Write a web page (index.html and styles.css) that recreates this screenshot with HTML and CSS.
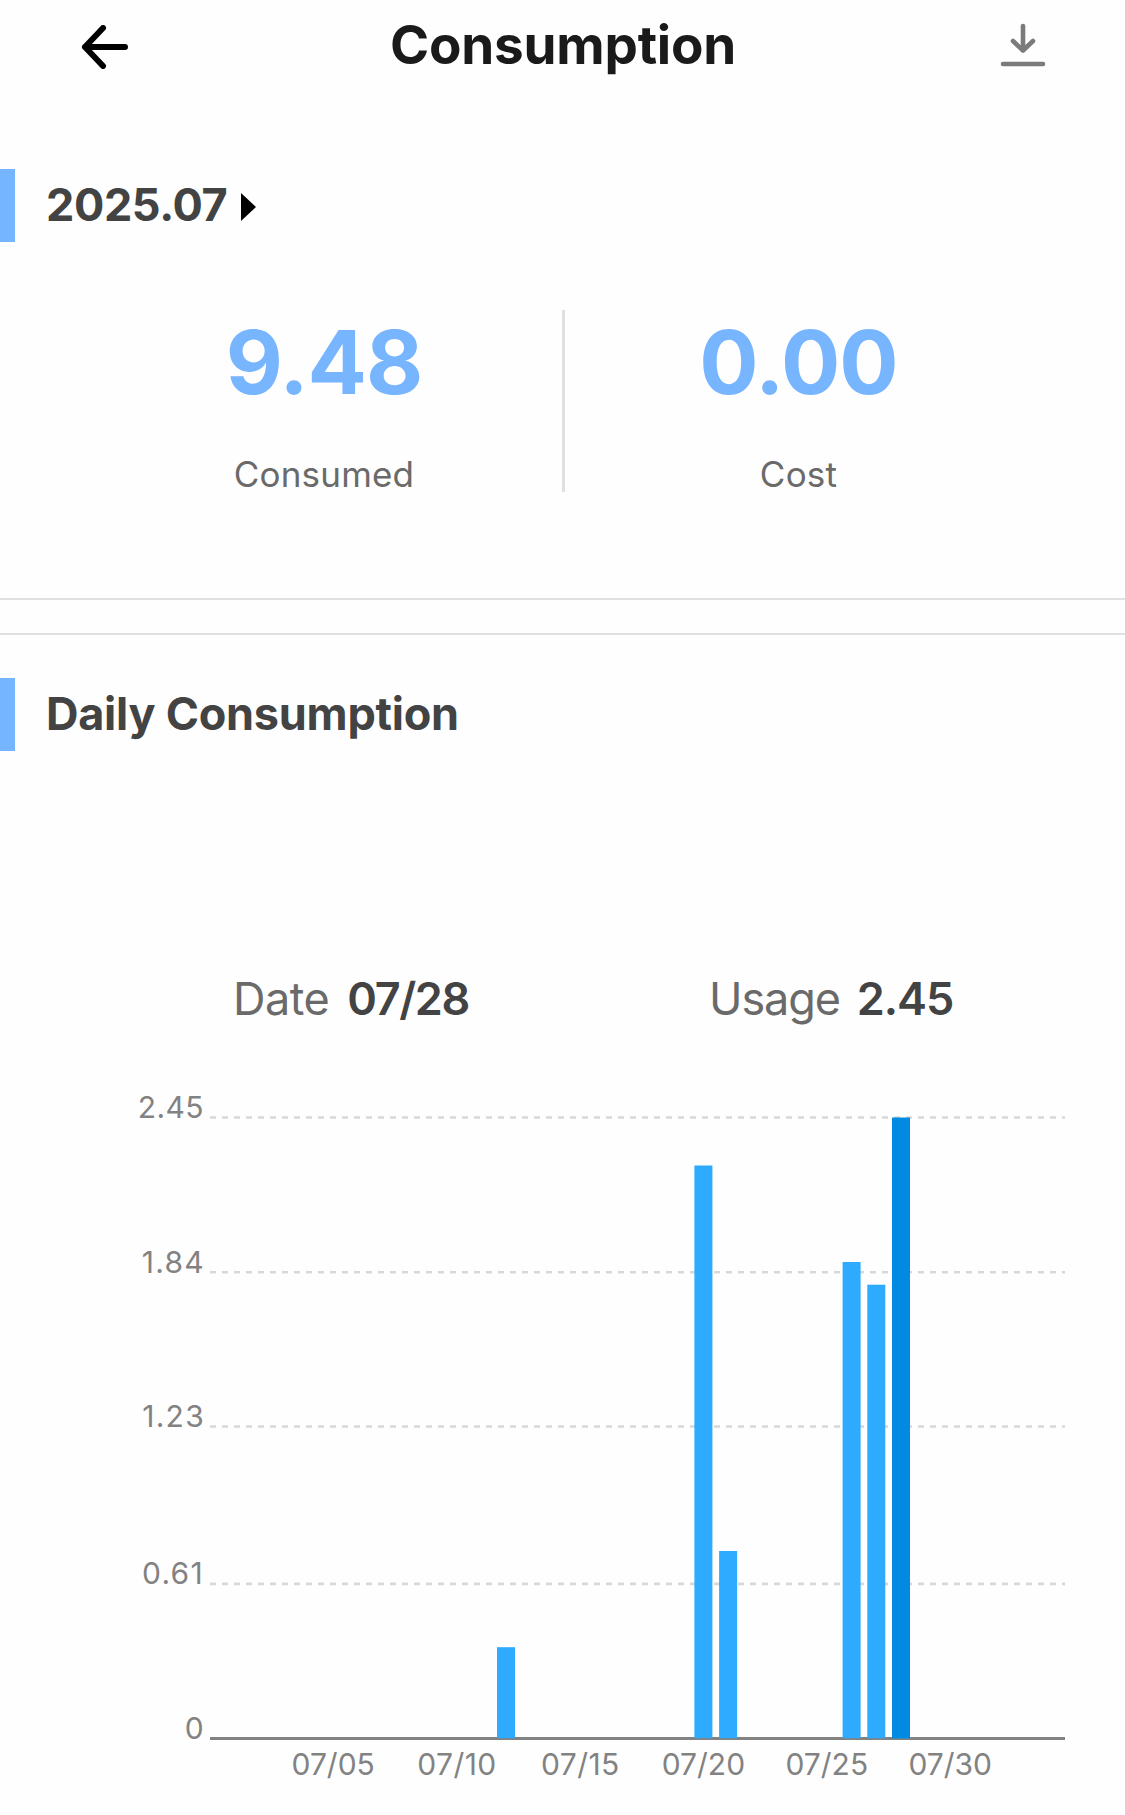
FILE: index.html
```html
<!DOCTYPE html>
<html lang="en">
<head>
    <meta charset="UTF-8">
    <meta name="viewport" content="width=device-width, initial-scale=1.0">
    <title>Consumption</title>
    <link rel="stylesheet" href="styles.css">
</head>
<body>
    <header class="header">
        <svg class="icon-back" viewBox="0 0 48 44">
            <path d="M44 22H4M22 3L4 22L22 41"/>
        </svg>
        <h1>Consumption</h1>
        <svg class="icon-download" viewBox="0 0 46 44">
            <path d="M23 3V27M13 18L23 27.5L33 18M3 41H43"/>
        </svg>
    </header>

    <section class="summary">
        <div class="section-title month">
            <span>2025.07</span>
            <svg class="caret" viewBox="0 0 15 28"><path d="M0 0L15 14L0 28Z"/></svg>
        </div>
        <div class="totals">
            <div class="total">
                <div class="value">9.48</div>
                <div class="label">Consumed</div>
            </div>
            <div class="total">
                <div class="value">0.00</div>
                <div class="label">Cost</div>
            </div>
        </div>
    </section>

    <section class="daily">
        <h2 class="section-title daily-title">Daily Consumption</h2>
        <div class="selected">
            <div class="selected-item"><span class="name">Date</span><b class="day">07/28</b></div>
            <div class="selected-item"><span class="name usage">Usage</span><b>2.45</b></div>
        </div>
        <svg class="chart" viewBox="0 1080 1125 735">
            <g class="grid">
                <path d="M210 1117.5H1065"/>
                <path d="M210 1272.2H1065"/>
                <path d="M210 1426.5H1065"/>
                <path d="M210 1583.9H1065"/>
            </g>
            <path class="axis" d="M210 1738.5H1065"/>
            <g class="bars">
                <rect x="497" y="1647.2" width="18" height="91"/>
                <rect x="694.4" y="1165.5" width="18" height="572.7"/>
                <rect x="719.1" y="1551" width="18" height="187.2"/>
                <rect x="842.6" y="1262" width="18" height="476.2"/>
                <rect x="867.3" y="1284.7" width="18" height="453.5"/>
                <rect class="active" x="892" y="1117.5" width="18" height="621"/>
            </g>
            <g class="y-labels">
                <text x="204" y="1117.5">2.45</text>
                <text class="spaced" x="205" y="1272.5">1.84</text>
                <text class="spaced" x="205" y="1427">1.23</text>
                <text class="spaced" x="204" y="1584">0.61</text>
                <text x="204" y="1738.5">0</text>
            </g>
            <g class="x-labels">
                <text x="333.2" y="1774.5">07/05</text>
                <text class="tens" x="457" y="1774.5">07/10</text>
                <text class="tens" x="580.4" y="1774.5">07/15</text>
                <text x="703.4" y="1774.5">07/20</text>
                <text x="826.8" y="1774.5">07/25</text>
                <text x="950.2" y="1774.5">07/30</text>
            </g>
        </svg>
    </section>
</body>
</html>
```
FILE: styles.css
```css
* {
    box-sizing: border-box;
}
body {
    margin: 0;
    background: #fefefe;
    font-family: Inter, sans-serif;
    color: #434343;
}
.header {
    display: flex;
    justify-content: space-between;
    align-items: center;
    height: 93px;
    padding: 0 79px 0 80px;
}
h1 {
    margin: -3px 0 0 -3px;
    font-size: 53px;
    font-weight: 700;
    letter-spacing: -0.2px;
    color: #1a1a1a;
}
.icon-back,
.icon-download {
    fill: none;
    stroke-linecap: round;
    stroke-linejoin: round;
}
.icon-back {
    width: 48px;
    height: 44px;
    margin-left: 1px;
    stroke: #000;
    stroke-width: 6;
}
.icon-download {
    width: 46px;
    height: 44px;
    margin-top: -3px;
    stroke: #7b7b7b;
    stroke-width: 4.6;
}
.summary {
    height: 507px;
    padding-top: 76px;
    border-bottom: 2px solid #e0e0e0;
}
.section-title {
    display: flex;
    align-items: center;
    height: 73px;
    margin: 0;
    padding-left: 31px;
    border-left: 15px solid #75b5ff;
    font-size: 45px;
    font-weight: 650;
    line-height: 54px;
}
.section-title span {
    margin-top: -1px;
    letter-spacing: -0.4px;
}
.daily-title {
    padding-bottom: 1px;
    letter-spacing: -0.25px;
}
.caret {
    width: 15px;
    height: 28px;
    margin: 2px 0 0 14px;
}
.totals {
    display: grid;
    grid-template-columns: 476px 470px;
    grid-template-rows: 182px;
    margin: 68px 0 0 86px;
}
.total {
    text-align: center;
}
.total + .total {
    border-left: 3px solid #e0e0e0;
}
.value {
    margin-top: 6px;
    font-size: 88px;
    font-weight: 700;
    line-height: 92px;
    letter-spacing: -1px;
    color: #77b5ff;
}
.label {
    margin-top: 45px;
    font-size: 35px;
    line-height: 43px;
    letter-spacing: 0.2px;
    color: #6a6a6a;
}
.daily {
    margin-top: 33px;
    padding-top: 43px;
    border-top: 2px solid #e0e0e0;
}
.selected {
    display: grid;
    grid-template-columns: 476px 1fr;
    height: 60px;
    margin-top: 218px;
    padding-left: 233px;
    font-size: 45px;
    line-height: 59px;
}
.selected b {
    font-weight: 600;
    letter-spacing: -1.1px;
}
.selected .day {
    letter-spacing: -1.4px;
}
.name {
    margin-right: 18px;
    letter-spacing: -0.5px;
    color: #6a6a6a;
}
.usage {
    margin-right: 17px;
    letter-spacing: -1.1px;
}
.chart {
    display: block;
    width: 1125px;
    height: 735px;
    margin-top: 51px;
}
.grid path {
    stroke: #d8d8d8;
    stroke-width: 2.6;
    stroke-dasharray: 6 6;
}
.axis {
    stroke: #828282;
    stroke-width: 3;
}
.bars rect {
    fill: #2eabff;
}
.bars .active {
    fill: #028ae2;
}
.chart text {
    font-size: 30px;
    fill: #828282;
}
.y-labels text {
    text-anchor: end;
    letter-spacing: 0.4px;
}
.y-labels .spaced {
    letter-spacing: 1.3px;
}
.x-labels text {
    text-anchor: middle;
}
.x-labels .tens {
    letter-spacing: 0.4px;
}
```
